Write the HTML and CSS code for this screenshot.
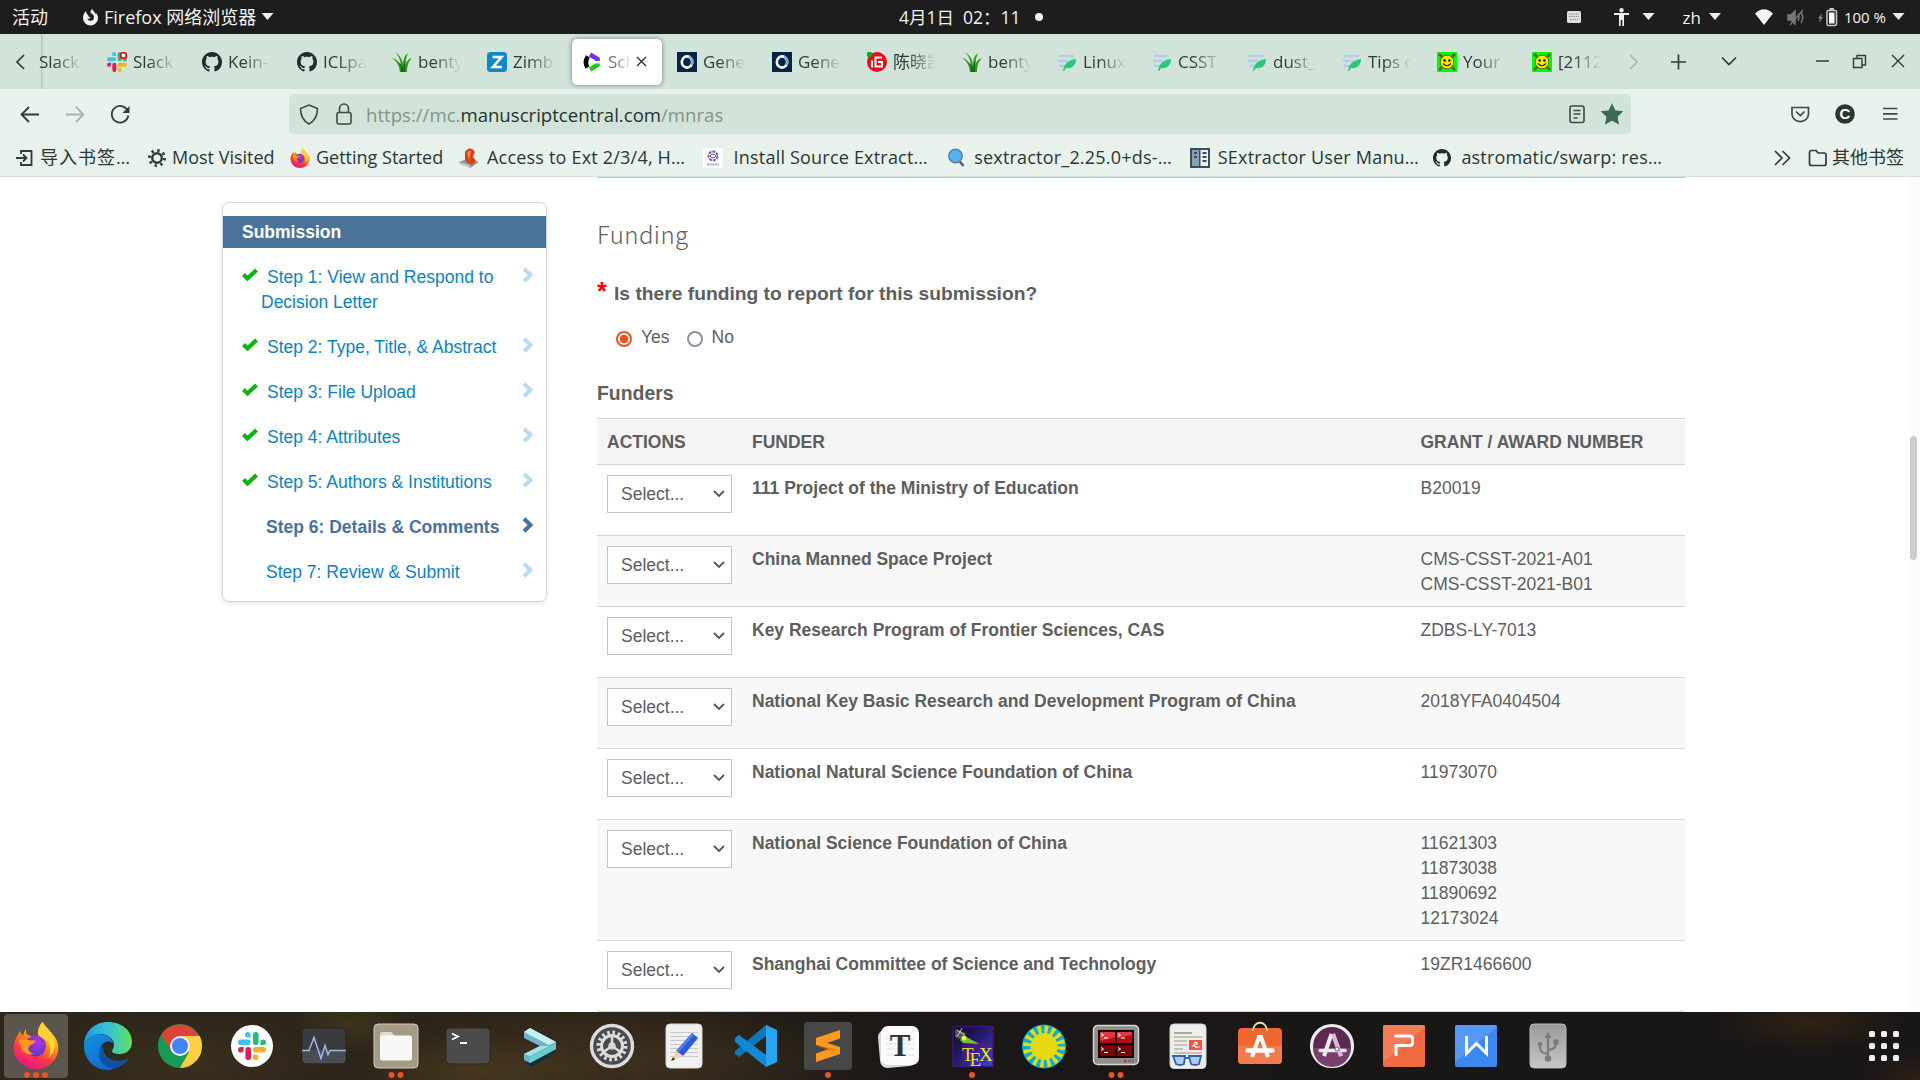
FILE: index.html
```html
<!DOCTYPE html>
<html lang="zh">
<head>
<meta charset="utf-8">
<title>ScholarOne Manuscripts</title>
<link rel="stylesheet" href="styles.css">
</head>
<body>
<svg class="defs" width="0" height="0">
  <symbol id="github" viewBox="0 0 16 16"><path fill="#222930" d="M8 0C3.58 0 0 3.58 0 8c0 3.54 2.29 6.53 5.47 7.59.4.07.55-.17.55-.38 0-.19-.01-.82-.01-1.49-2.01.37-2.53-.49-2.69-.94-.09-.23-.48-.94-.82-1.13-.28-.15-.68-.52-.01-.53.63-.01 1.08.58 1.23.82.72 1.21 1.87.87 2.33.66.07-.52.28-.87.51-1.07-1.78-.2-3.64-.89-3.64-3.95 0-.87.31-1.59.82-2.15-.08-.2-.36-1.02.08-2.12 0 0 .67-.21 2.2.82.64-.18 1.32-.27 2-.27s1.36.09 2 .27c1.53-1.04 2.2-.82 2.2-.82.44 1.1.16 1.92.08 2.12.51.56.82 1.27.82 2.15 0 3.07-1.87 3.75-3.65 3.95.29.25.54.73.54 1.48 0 1.07-.01 1.93-.01 2.2 0 .21.15.46.55.38A8 8 0 0 0 16 8c0-4.42-3.58-8-8-8z"/></symbol>
  <symbol id="slack" viewBox="0 0 20 20">
    <g fill="#36c5f0"><rect x="0" y="5.3" width="9" height="4" rx="2"/><path d="M9 4H7a2 2 0 1 1 2-2z"/></g>
    <g fill="#2eb67d"><rect x="10.7" y="0" width="4" height="9.3" rx="2"/><path d="M16 9.3v-2a2 2 0 1 1 2 2z"/></g>
    <g fill="#ecb22e"><rect x="10.7" y="10.7" width="9.3" height="4" rx="2"/><path d="M10.7 16h2a2 2 0 1 1-2 2z"/></g>
    <g fill="#e01e5a"><rect x="5.3" y="10.7" width="4" height="9.3" rx="2"/><path d="M4 10.7v2a2 2 0 1 1-2-2z"/></g>
  </symbol>
  <symbol id="grass" viewBox="0 0 20 20"><path fill="#2f9a1f" d="M8 20C7 13 5 9 0 6c5 1 8 5 9 10C9 9 7 4 3 0c6 4 8 9 8 14 0-6 1-10 5-13-2 5-3 9-3 13 1-4 3-7 7-8-4 4-5 9-5 14z"/><path fill="#116b10" d="M9 20c0-5-1-8-3-10 4 2 5 5 5 9 0-5 1-8 3-11-1 4-1 8-1 12z"/></symbol>
  <symbol id="gene" viewBox="0 0 20 20"><rect width="20" height="20" fill="#04254a"/><ellipse cx="10" cy="10" rx="5.2" ry="5.6" fill="none" stroke="#fff" stroke-width="2.6"/><path d="M12 4.500A5.400 5.600 0 0 1 14.500 13" fill="none" stroke="#8fa0b8" stroke-width="2.400"/></symbol>
  <symbol id="leaf" viewBox="0 0 20 20"><path d="M2 4h15M1 9h10M2 14h6" stroke="#b4cdea" stroke-width="2.300" fill="none"/><path d="M6 19C7 12 11 8 19 7c0 6-4 10-10 9l-2 3z" fill="#26c87b"/></symbol>
  <symbol id="smile" viewBox="0 0 20 20"><rect width="20" height="20" fill="#00fb08"/><path d="M2 2l16 16M18 2L2 18" stroke="#6b5b35" stroke-width="2.600"/><circle cx="10" cy="10" r="6.800" fill="#ffe900" stroke="#555009" stroke-width=".8"/><circle cx="7.600" cy="8.500" r="1.200"/><circle cx="12.400" cy="8.500" r="1.200"/><path d="M6 11.500q4 4.500 8 0" fill="none" stroke="#222" stroke-width="1.200"/></symbol>
  <symbol id="fox" viewBox="0 0 45 47">
    <linearGradient id="fx1" x1=".8" y1="0" x2=".3" y2="1"><stop offset="0" stop-color="#fff44f"/><stop offset=".4" stop-color="#ff980e"/><stop offset=".7" stop-color="#ff3647"/><stop offset="1" stop-color="#e31587"/></linearGradient>
    <radialGradient id="fx2" cx=".6" cy=".3" r=".8"><stop offset="0" stop-color="#b833e1"/><stop offset="1" stop-color="#4a3cbd"/></radialGradient>
    <path fill="url(#fx1)" d="M29 0c2 4 6 7 9 11 5 5 7 10 7 15a22.500 21 0 0 1-45 0c0-6 3-11 5-14l1-3 3 5 3-7 1 5 6 3 6-1c-2-5 1-10 4-14z"/>
    <circle cx="22" cy="24" r="10.500" fill="url(#fx2)"/>
    <path fill="#ff9a1c" d="M5 18c4-1 7 0 10 0 3 1 5 0 7 1-1 3-4 3-6 5-3 3 0 7 5 8-8 2-14-3-14-10z"/>
    <path fill="#ffd23a" d="M29 0c2 4 6 7 9 11 6 8 4 19-3 25 3-8 2-14-3-18-5-4-8-4-7-8 0-4 1-7 4-10z"/>
  </symbol>
  <symbol id="check" viewBox="0 0 16 13"><path d="M1.500 6.500l4 4L14.500 2" fill="none" stroke="#12b20e" stroke-width="4.200"/></symbol>
  <symbol id="chev" viewBox="0 0 12 16"><path d="M2 1.800L8.500 8 2 14.200" fill="none" stroke="currentColor" stroke-width="4"/></symbol>
  <symbol id="tri" viewBox="0 0 12 8"><path d="M0 0h12L6 7z" fill="#eee"/></symbol>
  <symbol id="down" viewBox="0 0 12 8"><path d="M1 1l5 5 5-5" fill="none" stroke="#555" stroke-width="1.800"/></symbol>
</svg>

<header class="topbar">
  <span class="activities t">活动</span>
  <svg class="ffmono" width="17" height="17" viewBox="0 0 17 17"><path d="M1 9a7.500 7.500 0 0 0 15 0c0-2-.8-4-2-5l-.3 1.200C13 3.500 11.500 2 10 0 8.500 1.300 8.500 3 8.600 4.200 10.800 4.600 12 6.500 12 8.500a3.500 3.500 0 0 1-6.800 1C6.500 10 8 9.800 8.500 8.500 7 8.300 6.500 7.500 6.300 6.500L4.500 4.300 4 2C2 4 1 6.500 1 9z" fill="#f2f2f2"/></svg>
  <span class="appname t">Firefox 网络浏览器</span>
  <svg class="tri" width="13" height="8"><use href="#tri"/></svg>
  <span class="clock t">4月1日&nbsp; 02：11</span>
  <i class="dot"></i>
  <svg class="kbd" width="14" height="12"><rect width="14" height="12" rx="1.500" fill="#dedede"/><path d="M2 3h10M2 5.500h10M3 8.500h8" stroke="#888" stroke-dasharray="1.300 1"/></svg>
  <svg class="person" width="15" height="18" viewBox="0 0 15 18"><circle cx="7.500" cy="2.200" r="2.200" fill="#eee"/><path d="M0 5h15v2H10v11H8.300v-6H6.700v6H5V7H0z" fill="#eee"/></svg>
  <svg class="tri a1" width="13" height="8"><use href="#tri"/></svg>
  <span class="zh t">zh</span>
  <svg class="tri a2" width="12" height="8"><use href="#tri"/></svg>
  <svg class="wifi" width="18" height="16"><path d="M0 4.500Q9-4 18 4.500L9 16z" fill="#f4f4f4"/></svg>
  <svg class="mute" width="19" height="17" viewBox="0 0 19 17" fill="none" stroke="#777" stroke-width="1.500"><path d="M1 6h3l4-4v13l-4-4H1z" fill="#777"/><path d="M11 5q2 3 0 7M14 3q3.500 5 0 11M3 16L16 1"/></svg>
  <svg class="batt" width="20" height="19" viewBox="0 0 20 19"><path d="M4 5L0 10.500h2L1 15l4-6H3z" fill="#888"/><rect x="9" y="2.500" width="9.500" height="15" rx="1.500" fill="none" stroke="#c9c9c9" stroke-width="1.500"/><rect x="11" y="4.500" width="5.500" height="11" fill="#fff"/><path d="M11.500 1h4.500" stroke="#c9c9c9" stroke-width="2"/></svg>
  <span class="pct t">100 %</span>
  <svg class="tri a3" width="13" height="8"><use href="#tri"/></svg>
</header>

<nav class="tabs">
  <svg class="scroll" width="41" height="55" fill="none" stroke="#2f3d35" stroke-width="1.700"><path d="M24 21l-7 7 7 7"/></svg>
  <div class="tab cut"><span class="fade">Slack</span></div>
  <div class="tab"><svg width="20" height="20"><use href="#slack"/><circle cx="16.500" cy="3.500" r="2.900" fill="#fff" stroke="#e11" stroke-width="1.800"/></svg><span class="fade">Slack</span></div>
  <div class="tab"><svg width="20" height="20"><use href="#github"/></svg><span class="fade">Kein-</span></div>
  <div class="tab"><svg width="20" height="20"><use href="#github"/></svg><span class="fade">ICLpa</span></div>
  <div class="tab"><svg width="20" height="20"><use href="#grass"/></svg><span class="fade">benty</span></div>
  <div class="tab"><svg width="20" height="20"><rect width="20" height="20" rx="3.500" fill="#1089c9"/><path d="M5.500 5h9L6 15h9" fill="none" stroke="#fff" stroke-width="2.600"/></svg><span class="fade">Zimb</span></div>
  <div class="tab active"><svg width="20" height="20" fill="none" stroke-width="4.600"><path d="M6 4.500Q2 10 5.500 15.500" stroke="#000"/><path d="M8 2.500l7.500 4.500v2" stroke="#6c35f0"/><path d="M8 17.500l7.500-4.500v-1.500" stroke="#1fc813"/></svg><span class="fade">Sch</span><svg class="x" width="12" height="12"><path d="M1 1l9 9M10 1l-9 9" stroke="#333" stroke-width="1.400"/></svg></div>
  <div class="tab"><svg width="20" height="20"><use href="#gene"/></svg><span class="fade">Gene</span></div>
  <div class="tab"><svg width="20" height="20"><use href="#gene"/></svg><span class="fade">Gene</span></div>
  <div class="tab"><svg width="20" height="20" fill="none"><circle cx="10" cy="10" r="10" fill="#e0101c"/><circle cx="2.500" cy="2.500" r="2.800" fill="#16a81c"/><path d="M15 5.500H8.500v9H15V10h-4M5 8.500v7" stroke="#fff" stroke-width="2"/></svg><span class="fade">陈晓凯</span></div>
  <div class="tab"><svg width="20" height="20"><use href="#grass"/></svg><span class="fade">benty</span></div>
  <div class="tab"><svg width="20" height="20"><use href="#leaf"/></svg><span class="fade">Linux</span></div>
  <div class="tab"><svg width="20" height="20"><use href="#leaf"/></svg><span class="fade">CSST</span></div>
  <div class="tab"><svg width="20" height="20"><use href="#leaf"/></svg><span class="fade">dust_</span></div>
  <div class="tab"><svg width="20" height="20"><use href="#leaf"/></svg><span class="fade">Tips o</span></div>
  <div class="tab"><svg width="20" height="20"><use href="#smile"/></svg><span class="fade">Your</span></div>
  <div class="tab"><svg width="20" height="20"><use href="#smile"/></svg><span class="fade">[2112</span></div>
  <svg class="tools" width="303" height="55" viewBox="1617 0 303 55" fill="none" stroke="#2f3d35" stroke-width="1.700"><path d="M1630 21l7 7-7 7" stroke="#a9b9b0"/><path d="M1671 28h15M1678.500 20.500v15M1722 23.500l7 7 7-7"/><path d="M1816 27h13M1853.500 24.500h8.500v9h-8.500zM1857 24v-2.500h8.500V31H1862M1892 21l12 12M1904 21l-12 12" stroke-width="1.400"/></svg>
</nav>

<div class="toolbar">
  <svg width="150" height="50" fill="none" stroke="#2f3d35" stroke-width="1.800"><path d="M39 25.500H22M29 18l-7.500 7.500L29 33"/><path d="M66 25.500h17M76 18l7.500 7.500L76 33" stroke="#a9b4ad"/><path d="M127.500 21.500a8.300 8.300 0 1 0 .8 5"/><path d="M129.500 17v7h-7z" fill="#2f3d35" stroke="none"/></svg>
  <div class="url">
    <svg width="77" height="40" fill="none" stroke="#3d4b43" stroke-width="1.600"><path d="M20 11l8.500 3.500c0 7-2 12-8.500 15.500-6.500-3.500-8.500-8.500-8.500-15.500z"/><rect x="48" y="18.500" width="14" height="11.500" rx="2"/><path d="M50.500 18v-3.500a4.500 4.500 0 0 1 9 0V18"/></svg>
    <span class="t"><s>https://mc.</s>manuscriptcentral.com<s>/mnras</s></span>
    <svg class="right" width="66" height="40" viewBox="1565 0 66 40" fill="none" stroke="#3d4b43" stroke-width="1.600"><rect x="1570" y="12" width="14" height="16.500" rx="2"/><path d="M1573.500 16.500h7M1573.500 20h7M1573.500 24h4"/><path d="M1612 11l2.900 6 6.600.9-4.800 4.600 1.200 6.500-5.900-3.200-5.900 3.200 1.200-6.500-4.800-4.600 6.600-.9z" fill="#3d6a52" stroke="#3d6a52"/></svg>
  </div>
  <svg class="right" width="140" height="50" viewBox="1780 0 140 50" fill="none" stroke="#3d4b43" stroke-width="1.700"><path d="M1792 18.500h16.500v6.500a8.200 7.500 0 0 1-16.500 0zM1796 22.500l4.300 4 4.300-4"/><circle cx="1845" cy="25" r="9.800" fill="#2b3631" stroke="none"/><text x="1845" y="30" class="badge">C</text><path d="M1883 19.500h14.500M1883 24.800h14.500M1883 30h14.500"/></svg>
</div>

<div class="bookmarks">
  <div class="bm b1"><svg width="20" height="20" fill="none" stroke="#2f3d35" stroke-width="1.800"><path d="M6 6V3h10.500v14H6v-3M1 10h10M8 6.500l3.500 3.500L8 13.500"/></svg><span class="t">导入书签…</span></div>
  <div class="bm b2"><svg width="20" height="20" fill="none" stroke="#2f3d35"><circle cx="10" cy="10" r="4.800" stroke-width="2.400"/><circle cx="10" cy="10" r="7.600" stroke-width="2.800" stroke-dasharray="2.400 3.568"/></svg><span class="t">Most Visited</span></div>
  <div class="bm b3"><svg width="20" height="20"><use href="#fox"/></svg><span class="t">Getting Started</span></div>
  <div class="bm"><svg width="20" height="20"><path d="M0 14l8-3 12 3-9 6z" fill="#8d949b"/><path d="M0 14l11 3v3L0 16z" fill="#c3c8cc"/><path d="M6 4q3-5 7-3 4 2 2 5l-1 3 3 4-4 4-5-2-2-4z" fill="#d6401b"/><path d="M8 5q2-3 4-2l-2 9z" fill="#f08a4e"/></svg><span class="t">Access to Ext 2/3/4, H…</span></div>
  <div class="bm"><svg width="20" height="20"><rect width="20" height="20" fill="#fff"/><circle cx="10" cy="8" r="4.500" fill="none" stroke="#7b5aa6" stroke-width="2" stroke-dasharray="3 1"/><path d="M7 8q3-4 6 0-3 4-6 0" fill="none" stroke="#4d3a86"/><path d="M4 16.500h12" stroke="#b49ed0" stroke-width="2" stroke-dasharray="2 .7"/></svg><span class="t i2">Install Source Extract…</span></div>
  <div class="bm"><svg width="20" height="20"><path d="M12.500 12l5 6" stroke="#555e66" stroke-width="2.600"/><circle cx="9.500" cy="8" r="6.700" fill="#57b2f4" stroke="#5c7f9e" stroke-width="1.500"/></svg><span class="t">sextractor_2.25.0+ds-…</span></div>
  <div class="bm"><svg width="20" height="20"><rect width="20" height="20" fill="#3c4a5b"/><rect x="2" y="2" width="7" height="16" fill="#8ba0b2"/><rect x="10.500" y="2" width="7.500" height="16" fill="#eef2f5"/><path d="M4 5h3M4 9h3M12.500 5h4M12.500 9h4M12.500 13h4" stroke="#3c4a5b" stroke-width="2"/></svg><span class="t">SExtractor User Manu…</span></div>
  <div class="bm"><svg width="18" height="18"><use href="#github"/></svg><span class="t i3">astromatic/swarp: res…</span></div>
  <svg class="more" width="20" height="20" fill="none" stroke="#2f3d35" stroke-width="1.700"><path d="M2 3l7 7-7 7M9.500 3l7 7-7 7"/></svg>
  <div class="other"><svg width="20" height="20" fill="none" stroke="#2f3d35" stroke-width="1.700"><path d="M1.500 15.500v-11q0-2 2-2H8L10 5h6q2 0 2 2v8.500q0 2-2 2H3.500q-2 0-2-2z"/></svg><span class="t">其他书签</span></div>
</div>

<main class="page">
  <aside class="panel">
    <h3>Submission</h3>
    <ul>
      <li><svg class="ck" width="16" height="13"><use href="#check"/></svg><a class="done">Step 1: View and Respond to Decision Letter</a><svg class="cv" width="12" height="16"><use href="#chev"/></svg></li>
      <li><svg class="ck" width="16" height="13"><use href="#check"/></svg><a class="done">Step 2: Type, Title, &amp; Abstract</a><svg class="cv" width="12" height="16"><use href="#chev"/></svg></li>
      <li><svg class="ck" width="16" height="13"><use href="#check"/></svg><a class="done">Step 3: File Upload</a><svg class="cv" width="12" height="16"><use href="#chev"/></svg></li>
      <li><svg class="ck" width="16" height="13"><use href="#check"/></svg><a class="done">Step 4: Attributes</a><svg class="cv" width="12" height="16"><use href="#chev"/></svg></li>
      <li><svg class="ck" width="16" height="13"><use href="#check"/></svg><a class="done">Step 5: Authors &amp; Institutions</a><svg class="cv" width="12" height="16"><use href="#chev"/></svg></li>
      <li class="current"><a class="todo">Step 6: Details &amp; Comments</a><svg class="cv" width="12" height="16"><use href="#chev"/></svg></li>
      <li><a class="todo">Step 7: Review &amp; Submit</a><svg class="cv" width="12" height="16"><use href="#chev"/></svg></li>
    </ul>
  </aside>
  <section class="content">
    <h2>Funding</h2>
    <p class="question"><b class="req">*</b><b class="t">Is there funding to report for this submission?</b></p>
    <p class="radios"><i class="radio on"></i><span>Yes</span><i class="radio"></i><span>No</span></p>
    <h4>Funders</h4>
    <div class="table">
      <div class="row head"><span>ACTIONS</span><span>FUNDER</span><span>GRANT / AWARD NUMBER</span></div>
      <div class="row"><div class="select">Select...<svg width="12" height="8"><use href="#down"/></svg></div><b>111 Project of the Ministry of Education</b><span>B20019</span></div>
      <div class="row alt"><div class="select">Select...<svg width="12" height="8"><use href="#down"/></svg></div><b>China Manned Space Project</b><span>CMS-CSST-2021-A01<br>CMS-CSST-2021-B01</span></div>
      <div class="row"><div class="select">Select...<svg width="12" height="8"><use href="#down"/></svg></div><b>Key Research Program of Frontier Sciences, CAS</b><span>ZDBS-LY-7013</span></div>
      <div class="row alt"><div class="select">Select...<svg width="12" height="8"><use href="#down"/></svg></div><b>National Key Basic Research and Development Program of China</b><span>2018YFA0404504</span></div>
      <div class="row"><div class="select">Select...<svg width="12" height="8"><use href="#down"/></svg></div><b>National Natural Science Foundation of China</b><span>11973070</span></div>
      <div class="row alt"><div class="select">Select...<svg width="12" height="8"><use href="#down"/></svg></div><b>National Science Foundation of China</b><span>11621303<br>11873038<br>11890692<br>12173024</span></div>
      <div class="row"><div class="select">Select...<svg width="12" height="8"><use href="#down"/></svg></div><b>Shanghai Committee of Science and Technology</b><span>19ZR1466600</span></div>
    </div>
  </section>
  <div class="track"><div class="thumb"></div></div>
</main>

<footer class="dock">
  <svg width="72" height="68"><rect x="4" y="2" width="64" height="64" rx="4" fill="#fff" fill-opacity=".22"/><use href="#fox" x="13.500" y="10" width="45" height="47"/><g fill="#e95420"><circle cx="27" cy="63" r="3"/><circle cx="36" cy="63" r="3"/><circle cx="45" cy="63" r="3"/></g></svg>
  <svg width="72" height="68"><defs><linearGradient id="e1"><stop offset="0" stop-color="#1b9de2"/><stop offset=".5" stop-color="#35c1d8"/><stop offset="1" stop-color="#66e05a"/></linearGradient><linearGradient id="e2" x2=".6" y2="1"><stop offset="0" stop-color="#1593dc"/><stop offset="1" stop-color="#0a6ed0"/></linearGradient></defs><path d="M12 34C12 20 22 10 36 10c14 0 24 9 24 20 0 8-6 12-12 12-5 0-8-1-8-3 0-1 2-3 2-6 0-5-5-11-14-11-8 0-15 5-16 12z" fill="url(#e1)"/><path d="M12 34c1-7 7-12 15-12 7 0 13 4 14 9-6-4-13 0-13 8 0 9 7 15 15 17-2 1-5 2-7 2-14 0-24-11-24-24z" fill="url(#e2)"/><path d="M28 36c-4 12 4 20 14 21 7-2 13-7 15-11-8 5-25 4-26-10-1-2 0-4 1-5-2 1-3 3-4 5z" fill="#10519f"/></svg>
  <svg width="72" height="68"><circle cx="36" cy="34" r="22" fill="#169b55"/><path d="M17 23a22 22 0 0 1 38 1H36l-9 15z" fill="#dc4437"/><path d="M36 24h19.600A22 22 0 0 1 36 56l9-16z" fill="#ffcd40"/><circle cx="36" cy="34" r="10" fill="#f1f1f1"/><circle cx="36" cy="34" r="8" fill="#4285f4"/></svg>
  <svg width="72" height="68"><circle cx="36" cy="34" r="21" fill="#fff"/><use href="#slack" x="22" y="20" width="28" height="28"/></svg>
  <svg width="72" height="68"><rect x="14" y="16" width="44" height="36" rx="4" fill="#3b3b3d" stroke="#252527"/><path d="M14.500 38h43v10q0 3-3 3h-37q-3 0-3-3z" fill="#4b4d54"/><path d="M14 38.500h7l5-13 7 21 4-13 3 9 2-4h16" fill="none" stroke="#9cb6ee" stroke-width="1.500"/></svg>
  <svg width="72" height="68"><rect x="14" y="12" width="44" height="44" rx="4" fill="#a39b86" stroke="#d0cab9"/><path d="M20 22q0-2 2-2h9l4 4h10v6H20z" fill="#dedbd1"/><rect x="20" y="23.500" width="32" height="25" rx="2.500" fill="#f8f8f7"/><g fill="#e95420"><circle cx="31.500" cy="63" r="3"/><circle cx="40.500" cy="63" r="3"/></g></svg>
  <svg width="72" height="68"><rect x="14" y="16" width="44" height="36" rx="4" fill="#4b4b4b" stroke="#2b2b2b"/><path d="M20 21.500l6 3-6 3M28 31h7" fill="none" stroke="#fff" stroke-width="1.800"/></svg>
  <svg width="72" height="68"><path d="M22 50l28-12 2 2-25 15z" fill="#0b3038"/><path d="M20 20l6-4 26 14v7L26 51l-6-3v-6l16-8-16-8z" fill="#6eb4cd"/><path d="M20 20l6-4 26 14-7 3z" fill="#c6f1f2"/><path d="M20 42l16-8 9 0-19 10z" fill="#a5e3e6"/><path d="M26 45l26-13v5L26 51z" fill="#66cfcc"/></svg>
  <svg width="72" height="68"><circle cx="36" cy="34" r="20.500" fill="#4a4a4a" stroke="#dcdcdc" stroke-width="3.400"/><circle cx="36" cy="34" r="13.500" fill="none" stroke="#ddd" stroke-width="4" stroke-dasharray="2.600 2.702"/><circle cx="36" cy="34" r="10.500" fill="none" stroke="#ddd" stroke-width="3"/><circle cx="36" cy="34" r="3.800" fill="#ccc"/><path d="M36 34v-10M36 34l8.500 6M36 34l-8.500 6" stroke="#ddd" stroke-width="2.500"/></svg>
  <svg width="72" height="68"><rect x="18" y="12" width="36" height="44" rx="4" fill="#f0f0f0" stroke="#d6d6d6"/><path d="M22 20.500h28M22 24.500h28M22 28.500h28M22 32.500h28M22 36.500h28M22 40.500h28M22 44.500h28" stroke="#c8c8c8"/><path d="M28 39l16-18 6 5-15 18z" fill="#2c5bd5"/><path d="M28 39l16-18 2 2-16 18z" fill="#4f7fea"/><path d="M28 39l7 5-12 5z" fill="#f6cfa8"/><path d="M23 49l2-4 2 2.500z" fill="#333"/></svg>
  <svg width="72" height="68"><path d="M46 13l11 5v32l-11 5z" fill="#27a5ef"/><path d="M46 13v11L19 45l-4-3v-3z" fill="#0b77bd"/><path d="M15 26l4-3 27 20v12L15 30z" fill="#1389d2"/></svg>
  <svg width="72" height="68"><rect x="12" y="10" width="48" height="48" rx="3" fill="#474747"/><path d="M24 26l24-8v8.500l-13 4.500 13 4v7l-24 8v-8.500L37 37l-13-4z" fill="#ff9a1f"/><path d="M24 33l24 5-11 1z" fill="#c97400" opacity=".5"/><circle cx="36" cy="63" r="3" fill="#e95420"/></svg>
  <svg width="72" height="68"><rect x="15" y="17" width="36" height="38" rx="7" fill="#d9d9d9" transform="rotate(-5 33 36)"/><rect x="17" y="14" width="38" height="39" rx="7" fill="#fbfbfb"/><path d="M22 27h28M22 32h28M22 37h28M22 43h28" stroke="#e4e4e4"/><text x="36" y="44" class="typora">T</text></svg>
  <svg width="72" height="68"><defs><linearGradient id="tx" x2="1" y2="1"><stop offset="0" stop-color="#0c0a14"/><stop offset=".45" stop-color="#251a66"/><stop offset="1" stop-color="#3d43e0"/></linearGradient></defs><rect x="17" y="14.500" width="40" height="40" fill="url(#tx)" stroke="#4a0f83" stroke-width="1.500"/><path d="M27 27l28 5-30 20z" fill="#5b168f" opacity=".55"/><path d="M24 28l5-4 14 8-16-1z" fill="#6bc23c"/><path d="M19 17l11 4-5 7-6-3z" fill="#555"/><path d="M21 18l8 5M26 16l-5 9" stroke="#ccc"/><circle cx="28" cy="26" r="2.500" fill="#eff33a"/><text x="26" y="48.500" class="tex">T</text><text x="33.500" y="53.500" class="tex">E</text><text x="43" y="48.500" class="tex">X</text><circle cx="36" cy="63" r="3" fill="#e95420"/></svg>
  <svg width="72" height="68"><circle cx="36" cy="34.500" r="22" fill="#0caed0"/><circle cx="36" cy="34.500" r="17" fill="none" stroke="#e6d912" stroke-width="8" stroke-dasharray="3.400 3.276"/><circle cx="36" cy="34.500" r="13.500" fill="#e6d912"/></svg>
  <svg width="72" height="68"><rect x="13.500" y="13.500" width="45" height="39" rx="4" fill="#8f8f8b" stroke="#d5d5d2" stroke-width="1.500"/><rect x="18" y="18" width="36" height="28" fill="#190506"/><g fill="#b90d14"><rect x="20" y="20" width="15" height="11"/><rect x="37" y="20" width="15" height="11"/></g><g fill="#7c0509"><rect x="20" y="33.500" width="15" height="10.500"/><rect x="37" y="33.500" width="15" height="10.500"/></g><path d="M20 20h15v5l-15 4zM37 20h15v3l-15 3z" fill="#e8454b" opacity=".8"/><path d="M21 21.500l2.500 1.500-2.500 1.500M24 26h4M38 21.500l2.500 1.500-2.500 1.500M41 26h4M21 35.500l2.500 1.500-2.500 1.500M24 40.500h4M38 35.500l2.500 1.500-2.500 1.500M41 40.500h4" stroke="#fff" fill="none"/><circle cx="45" cy="49" r="1.300" fill="#f01818"/><rect x="48" y="47.500" width="6" height="3" fill="#777"/><g fill="#e95420"><circle cx="31.500" cy="63" r="3"/><circle cx="40.500" cy="63" r="3"/></g></svg>
  <svg width="72" height="68"><rect x="18" y="12" width="36" height="44.500" rx="4" fill="#ededed" stroke="#d4d4d4"/><path d="M22 21h18" stroke="#b0a898" stroke-width="2"/><path d="M22 25h28M22 29h13M22 33h13M22 37h9M22 41h28" stroke="#c8c2b6" stroke-width="2"/><rect x="37" y="28" width="13" height="10" fill="#f05545"/><path d="M40 34q6-1 5-3.500-2-1-3 2 0 4 6 2" fill="none" stroke="#fff" stroke-width="1.200"/><g fill="#b5cbe3" stroke="#2b66b2" stroke-width="1.800"><path d="M21 44h12l-1 8q-4 2-8 0zM37 44h12l-2 8q-4 2-8 0zM33 46h4"/></g></svg>
  <svg width="72" height="68"><rect x="14" y="16" width="44" height="36" rx="4" fill="#f1652e"/><path d="M14 34h44v14q0 4-4 4H18q-4 0-4-4z" fill="#f37b4c"/><path d="M29 19c0-11 14-11 14 0" fill="none" stroke="#f2d9a8" stroke-width="1.800"/><g stroke="#fff" fill="none" stroke-width="4"><path d="M28 45l7-20h2l7 20"/><path d="M23.500 38.500h25" stroke-linecap="round" stroke-width="4.500"/></g></svg>
  <svg width="72" height="68"><circle cx="36" cy="34" r="20.500" fill="#5d2950" stroke="#ededed" stroke-width="3.200"/><path d="M17 36h38a19 19 0 0 1-38 0z" fill="#77416b"/><g fill="none" stroke="#efe9ee" stroke-width="4"><path d="M28 44l7.500-22 M37 22l8 22" /><path d="M24 38.500h25" stroke-linecap="round" stroke-width="3.500"/></g><path d="M37 22l8 22" stroke="#d9b7e3" stroke-width="3.500"/><circle cx="41" cy="37" r="2" fill="#fff" stroke="#666"/></svg>
  <svg width="72" height="68"><rect x="15" y="13" width="42" height="42" rx="2" fill="#ee6a43"/><path d="M15 15q0-2 2-2h38q2 0 2 2L15 50z" fill="#f27d57"/><path d="M28 44V33.500h13.500q3 0 3-3v-3.500q0-3-3-3H26.500" fill="none" stroke="#fff" stroke-width="3"/></svg>
  <svg width="72" height="68"><rect x="15" y="13" width="42" height="42" rx="2" fill="#3d87f0"/><path d="M15 15q0-2 2-2h38q2 0 2 2L15 50z" fill="#5599f5"/><path d="M26.500 24v17.500l10-10 10 10V24" fill="none" stroke="#fff" stroke-width="3"/></svg>
  <svg width="72" height="68"><defs><linearGradient id="us" x2="0" y2="1"><stop offset="0" stop-color="#999"/><stop offset="1" stop-color="#c6c6c6"/></linearGradient></defs><rect x="18" y="12" width="36" height="44" rx="4" fill="url(#us)" stroke="#bbb"/><g fill="none" stroke="#7b7b7b" stroke-width="2.200"><path d="M36 24v22M36 42c-7-1-8-3-8-9M36 38c7-1 8-3 8-8"/></g><path d="M32.500 26l3.500-6 3.500 6z" fill="#7b7b7b"/><circle cx="28" cy="32" r="2.300" fill="#7b7b7b"/><rect x="41.500" y="27.500" width="5" height="5" fill="#7b7b7b"/><circle cx="36" cy="46.500" r="3.200" fill="#7b7b7b"/></svg>
  <svg class="grid" width="72" height="68" fill="#eee"><g id="r3"><rect x="21" y="19" width="6" height="6" rx="1.500"/><rect x="33" y="19" width="6" height="6" rx="1.500"/><rect x="45" y="19" width="6" height="6" rx="1.500"/></g><use href="#r3" y="12"/><use href="#r3" y="24"/></svg>
</footer>
</body>
</html>
```
FILE: styles.css
```css
* { box-sizing: border-box; }
body {
  margin: 0; width: 1920px; height: 1080px; overflow: hidden; background: #fff;
  display: flex; flex-direction: column;
  font-family: "Liberation Sans", Arial, sans-serif; font-size: 17.5px; line-height: 25px; color: #5e5e5e;
}
svg { display: block; flex: none; }
.defs { position: absolute; }
h2, h3, h4, p, ul { margin: 0; padding: 0; }
.t { white-space: nowrap; flex: none; }

.topbar, .tabs, .toolbar, .bookmarks { font-family: "Open Sans", "Noto Sans CJK SC", sans-serif; display: flex; align-items: center; flex: none; }

.topbar { height: 34px; background: #1d1d1d; color: #f2f2f2; padding-left: 12px; font-size: 18px; position: relative; }
.ffmono { margin-left: 34px; }
.appname { margin-left: 5px; }
.topbar .tri { margin-left: 5px; }
.clock { position: absolute; left: 899px; font-size: 17.5px; }
.dot { position: absolute; left: 1035px; top: 13px; width: 8px; height: 8px; border-radius: 50%; background: #f2f2f2; }
.kbd { margin-left: auto; }
.person { margin-left: 33px; }
.topbar .a1 { margin-left: 13px; }
.zh { margin-left: 28px; font-size: 17px; }
.topbar .a2 { margin-left: 8px; }
.wifi { margin-left: 34px; }
.mute { margin-left: 14px; }
.batt { margin-left: 12px; }
.pct { margin-left: 6px; font-size: 15px; }
.topbar .a3 { margin-left: 6px; margin-right: 15px; }

.tabs { height: 55px; background: #d2e3d9; color: #2f3d35; font-size: 17px; }
.tabs .scroll { box-shadow: 1px 0 2px #a9b9b0; }
.tab { width: 95px; height: 46px; padding-left: 10px; display: flex; align-items: center; gap: 6px; flex: none; position: relative; }
.tab.cut { width: 56px; padding: 0; }
.cut .fade { margin-left: -2px; }
.fade { width: 44px; overflow: hidden; white-space: nowrap; -webkit-mask-image: linear-gradient(90deg, #000 35%, transparent 98%); mask-image: linear-gradient(90deg, #000 35%, transparent 98%); }
.tab.active { width: 90px; margin-right: 5px; background: #fff; border-radius: 5px; box-shadow: 0 0 5px #6f8277; }
.active .fade { width: 24px; color: #777; }
.active .x { margin-left: -2px; }
.tools { margin-left: auto; }

.toolbar { height: 50px; background: #e9f1ec; }
.url { margin-left: 139px; width: 1342px; height: 40px; background: #d2e3d9; border-radius: 5px; display: flex; align-items: center; color: #26332c; font-size: 18.600px; }
.url s { text-decoration: none; color: #86938b; }
.right { margin-left: auto; }
.badge { font: bold 15px "Liberation Sans", sans-serif; fill: #fff; stroke: none; text-anchor: middle; }

.bookmarks { height: 38px; padding: 0 16px 0 15px; background: #e9f1ec; border-bottom: 1px solid #d2e3d9; color: #2a3831; font-size: 18px; }
.bm { width: 243.600px; display: flex; align-items: center; gap: 8px; flex: none; letter-spacing: .2px; }
.b1 { width: 132px; gap: 5px; letter-spacing: 1px; }
.b2 { width: 143px; gap: 5px; letter-spacing: 0; }
.b3 { width: 169px; gap: 6px; letter-spacing: 0; }
.i2 { margin-left: 3px; }
.i3 { margin-left: 2px; }
.more { margin-left: auto; margin-right: 15px; }
.other { display: flex; align-items: center; gap: 4px; }

.page { height: 835px; flex: none; overflow: hidden; display: flex; align-items: flex-start; padding-left: 222px; }
.panel { width: 325px; height: 400px; margin-top: 25px; padding-top: 13px; border: 1px solid #d6d6d6; border-radius: 7px; box-shadow: 0 1px 4px #e4e4e4; }
.panel h3 { height: 32px; padding-left: 19px; background: #4b7399; color: #fff; font-size: 17.500px; line-height: 32px; }
.panel ul { list-style: none; padding-top: 7px; }
.panel li { display: flex; align-items: flex-start; padding: 10px 12px 10px 19px; color: #0b84be; }
.ck { margin-top: 3px; }
.panel a { flex: 1; }
.done { padding-left: 3px; text-indent: 6px; }
.todo { padding-left: 24px; }
.cv { margin-top: 2px; color: #b9ddee; flex: none; }
.panel .current { font-weight: bold; color: #48719b; }
.current .cv { color: #41719c; }

.content { width: 1088px; margin-left: 50px; border-top: 1px solid #bcc8c1; }
.content h2 { margin-top: 36px; font: 300 24px/40px "Noto Sans CJK SC", sans-serif; letter-spacing: .400px; }
.question { margin-top: 27px; height: 25px; display: flex; font-size: 19.240px; }
.req { color: #f00; font-size: 25px; width: 17px; margin-top: -2px; }
.radios { margin-top: 19px; padding-left: 19px; display: flex; align-items: center; }
.radio { width: 16px; height: 16px; border: 2px solid #8f8f9d; border-radius: 50%; margin-right: 9px; margin-top: 3px; }
.radio.on { border-color: #e95420; background: radial-gradient(#e95420 0 4px, #fff 4.600px); }
.radios span { margin-right: 17px; }
.content h4 { margin-top: 31px; line-height: 25px; font-size: 19.400px; }
.table { margin-top: 12px; border-top: 1px solid #d6d6d6; }
.row { display: grid; grid-template-columns: 145px 668.500px 1fr; align-items: start; padding: 11px 10px 9px; min-height: 71px; border-bottom: 1px solid #d6d6d6; }
.row.head { min-height: 46px; background: #f4f4f4; font-weight: bold; }
.row.alt { background: #f8f8f8; }
.select { width: 125px; height: 38px; margin-top: -1px; background: #fff; border: 1px solid #c4c4c4; padding: 0 6px 0 13px; display: flex; align-items: center; justify-content: space-between; }
.track { width: 13px; height: 835px; margin-left: auto; background: #fcfcfc; padding: 259px 0 0 3px; }
.thumb { width: 7px; height: 124px; border-radius: 4px; background: #cdcdcd; }

.dock {
  height: 68px; flex: none; display: flex;
  background:
    radial-gradient(ellipse 60px 30px at 350px 12px, #4a431f88, transparent),
    radial-gradient(ellipse 150px 50px at 190px 50px, #43351f99, transparent),
    radial-gradient(ellipse 120px 40px at 480px 60px, #55431f88, transparent),
    radial-gradient(ellipse 260px 60px at 620px 50px, #42341fcc, transparent),
    radial-gradient(ellipse 100px 30px at 1810px 10px, #3c2813aa, transparent),
    radial-gradient(ellipse 60px 30px at 1920px 68px, #3c2416aa, transparent),
    linear-gradient(90deg, #2d261b, #2c241a 30%, #1a1716 48%, #181616);
}
.dock .grid { margin-left: auto; }
.typora { font: bold 31px "Liberation Serif", serif; fill: #333; text-anchor: middle; }
.tex { font: 19px "Liberation Serif", serif; fill: #f2e21c; }
```
